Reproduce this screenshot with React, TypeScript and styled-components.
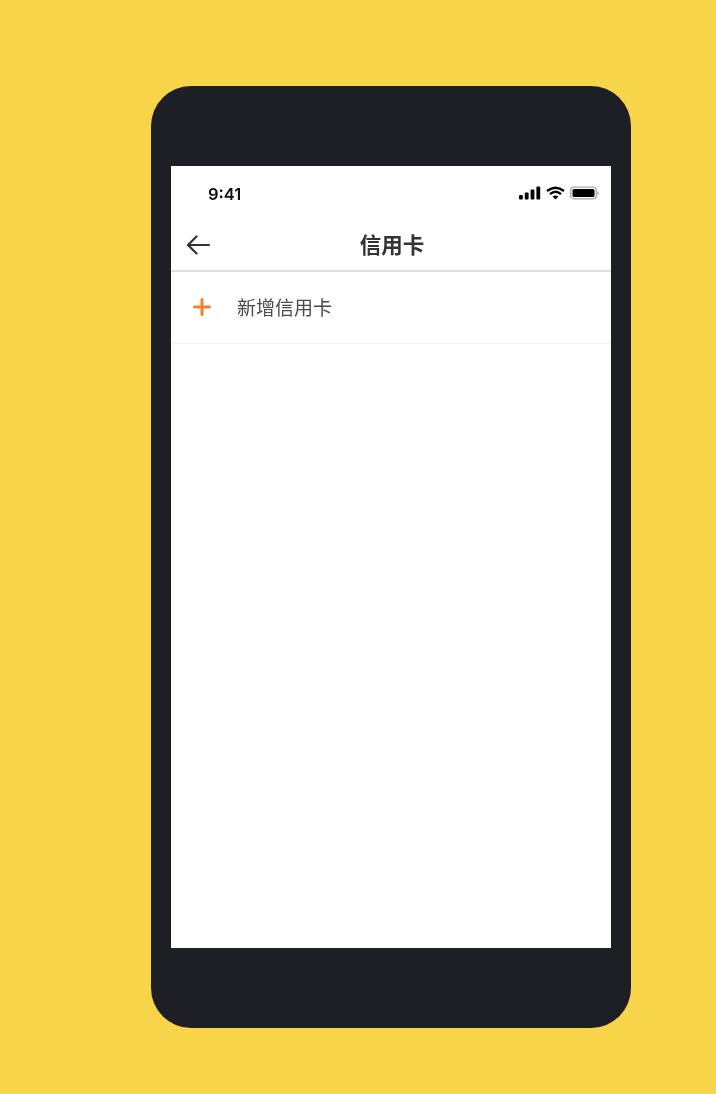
import React from "react";
import styled, { createGlobalStyle } from "styled-components";

const Global = createGlobalStyle`
  html, body { margin: 0; padding: 0; background: #f8d548; }
  body { font-family: "Inter", "Noto Sans CJK SC", sans-serif; }
`;
const Page = styled.div`
  width: 716px; height: 1094px; box-sizing: border-box; padding: 86px 0 0 151px; background: #f8d548; overflow: hidden;
`;
const Phone = styled.div`
  width: 480px; height: 942px; box-sizing: border-box; padding: 80px 20px; background: #1d1f24; border-radius: 40px;
`;
const Screen = styled.div`
  width: 440px; height: 782px; background: #fff; display: flex; flex-direction: column;
`;
const StatusBar = styled.div`
  height: 56px; flex: none; box-sizing: border-box; padding: 0 12px 2px 37px; display: flex; align-items: center; justify-content: space-between; filter: blur(0.4px);
`;
const Time = styled.span`
  font: 600 16.5px/1 "Inter", sans-serif; color: #111; margin-top: 2px;
`;
const StatusIcons = styled.div`
  display: flex; align-items: center; gap: 5px;
`;
const NavBar = styled.div`
  height: 48px; flex: none; border-bottom: 2px solid #dfdfdf; display: flex; align-items: center; justify-content: center; position: relative;
`;
const BackButton = styled.div`
  position: absolute; left: 15px; top: 12px; width: 25px; height: 24px; line-height: 0; filter: blur(0.3px);
`;
const Title = styled.h1`
  margin: -4px 0 0 2px; font: 700 21.5px/1 "Noto Sans CJK SC", sans-serif; color: #333; filter: blur(0.4px);
`;
const Row = styled.div`
  height: 71px; flex: none; border-bottom: 1px solid #f2f2f2; display: flex; align-items: center; padding-left: 22px; gap: 14px;
`;
const PlusIcon = styled.div`
  width: 30px; height: 20px; line-height: 0; margin-top: -1px; filter: blur(0.3px);
`;
const RowLabel = styled.span`
  font: 400 19px/1 "Noto Sans CJK SC", sans-serif; color: #4a4a4a; margin-top: -2px; filter: blur(0.4px);
`;

export default function App() {
  return (
    <Page>
      <Global />
      <Phone>
        <Screen>
          <StatusBar>
            <Time>9:41</Time>
            <StatusIcons>
              <svg width="22" height="14" viewBox="0 0 22 14" fill="#000">
                <rect x="0" y="9" width="3.8" height="4.5" rx="1" />
                <rect x="5.8" y="6.5" width="3.8" height="7" rx="1" />
                <rect x="11.6" y="3.5" width="3.8" height="10" rx="1" />
                <rect x="17.4" y="0.5" width="3.8" height="13" rx="1" />
              </svg>
              <svg width="19" height="14" viewBox="0 0 19 14" fill="none" stroke="#000" strokeWidth="2.4">
                <path d="M1 5 Q9.5 -1.5 18 5" />
                <path d="M4 8.2 Q9.5 3.5 15 8.2" />
                <path d="M9.5 13.5 L6.5 10.5 Q9.5 8.5 12.5 10.5 Z" fill="#000" stroke="none" />
              </svg>
              <svg width="29" height="14" viewBox="0 0 29 14">
                <rect x="0.7" y="1.2" width="25.6" height="11.6" rx="3.2" fill="none" stroke="#a8a8a8" strokeWidth="1.3" />
                <rect x="2.5" y="3" width="22" height="8" rx="1.6" fill="#000" />
                <path d="M27.5 5 Q29 6 29 7 Q29 8 27.5 9 Z" fill="#a8a8a8" />
              </svg>
            </StatusIcons>
          </StatusBar>
          <NavBar>
            <BackButton>
              <svg width="25" height="24" viewBox="0 0 25 24" fill="none" stroke="#333" strokeWidth="2.2" strokeLinecap="round" strokeLinejoin="round">
                <path d="M2 11 H23" />
                <path d="M10.5 2.5 L2 11 L10.5 19.5" />
              </svg>
            </BackButton>
            <Title>信用卡</Title>
          </NavBar>
          <Row>
            <PlusIcon>
              <svg width="18" height="20" viewBox="0 0 18 20" fill="none" stroke="#f5822a" strokeWidth="3" strokeLinecap="round">
                <path d="M1.5 10 H16.5" />
                <path d="M9 2.5 V17.5" />
              </svg>
            </PlusIcon>
            <RowLabel>新增信用卡</RowLabel>
          </Row>
        </Screen>
      </Phone>
    </Page>
  );
}
